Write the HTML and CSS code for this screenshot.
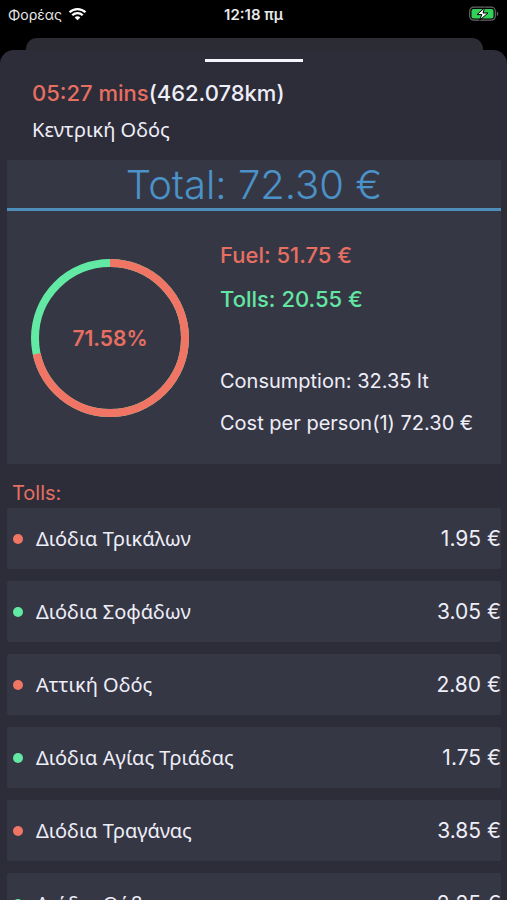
FILE: index.html
```html
<!DOCTYPE html>
<html lang="el">
<head>
  <meta charset="UTF-8">
  <meta name="viewport" content="width=device-width, initial-scale=1.0">
  <title>Route Cost</title>
  <link rel="stylesheet" href="styles.css">
</head>
<body>
  <!-- Status bar -->
  <header class="status-bar">
    <div class="carrier">
      <span>Φορέας</span>
      <svg class="wifi" viewBox="0 0 20 14" aria-hidden="true">
        <path d="M1.6 5.2a12 12 0 0 1 16.8 0" />
        <path d="M4.5 8.3a7.8 7.8 0 0 1 11 0" />
        <path class="wifi-base" d="M10 13.6l-3-3a4.2 4.2 0 0 1 6 0z" />
      </svg>
    </div>
    <time class="clock">12:18 πμ</time>
    <svg class="battery" viewBox="0 0 30 16" aria-hidden="true">
      <rect class="battery-case" x="0.7" y="1.2" width="25.6" height="13" rx="4" />
      <rect class="battery-level" x="2.5" y="3" width="22" height="9.4" rx="2" />
      <path class="battery-cap" d="M27.8 5.4c2 .8 2 3.8 0 4.6z" />
      <path class="battery-bolt" d="M15.6 1.8L8 8.6h4.8l-2.2 5.6L19 7h-5z" />
    </svg>
  </header>

  <div class="back-sheet"></div>

  <main class="sheet">
    <div class="grip"></div>

    <section class="route">
      <h1><span class="duration">05:27 mins</span>(462.078km)</h1>
      <p>Κεντρική Οδός</p>
    </section>

    <!-- Cost summary -->
    <section class="summary">
      <h2 class="total">Total: 72.30 €</h2>
      <div class="summary-body">
        <div class="chart">
          <svg viewBox="0 0 158 158" aria-hidden="true">
            <circle class="ring ring-tolls" cx="79" cy="79" r="75" />
            <circle class="ring ring-fuel" cx="79" cy="79" r="75" pathLength="100" />
          </svg>
          <span class="percent">71.58%</span>
        </div>
        <div class="costs">
          <p class="cost fuel">Fuel: 51.75 €</p>
          <p class="cost tolls">Tolls: 20.55 €</p>
          <p class="detail first">Consumption: 32.35 lt</p>
          <p class="detail">Cost per person(1) 72.30 €</p>
        </div>
      </div>
    </section>

    <!-- List of tolls -->
    <h3 class="list-title">Tolls:</h3>
    <ul class="toll-list">
      <li><span class="name">Διόδια Τρικάλων</span><span class="price">1.95 €</span></li>
      <li><span class="name">Διόδια Σοφάδων</span><span class="price">3.05 €</span></li>
      <li><span class="name">Αττική Οδός</span><span class="price">2.80 €</span></li>
      <li><span class="name">Διόδια Αγίας Τριάδας</span><span class="price">1.75 €</span></li>
      <li><span class="name">Διόδια Τραγάνας</span><span class="price">3.85 €</span></li>
      <li><span class="name">Διόδια Θήβας</span><span class="price">2.25 €</span></li>
    </ul>
  </main>
</body>
</html>
```
FILE: styles.css
```css
* {
  box-sizing: border-box;
}
body {
  display: flex;
  flex-direction: column;
  height: 100vh;
  margin: 0;
  overflow: hidden;
  background-color: #000;
  color: #eeeef8;
  font-family: Inter, "Noto Sans", sans-serif;
  font-size: 20px;
}
h1, h2, h3, p, ul {
  margin: 0;
  padding: 0;
  font-weight: normal;
}

/* Status bar */
.status-bar {
  display: grid;
  grid-template-columns: 1fr auto 1fr;
  align-items: center;
  flex: none;
  height: 28px;
  margin-bottom: 10px;
  padding: 0 8px;
  color: #e8e8e8;
  font-size: 14px;
}
.carrier {
  display: flex;
  align-items: center;
  gap: 6px;
}
.wifi {
  width: 19px;
  height: 14px;
  fill: none;
  stroke: #fff;
  stroke-width: 2.4;
}
.wifi-base {
  fill: #fff;
  stroke: none;
}
.clock {
  font-size: 15px;
  font-weight: 600;
}
.battery {
  justify-self: end;
  width: 30px;
  height: 16px;
}
.battery-case {
  fill: none;
  stroke: #666;
  stroke-width: 1.2;
}
.battery-level {
  fill: #32d158;
}
.battery-cap {
  fill: #666;
}
.battery-bolt {
  fill: #fff;
  stroke: #000;
  stroke-width: 1;
}

/* Sheets */
.back-sheet {
  flex: none;
  height: 24px;
  margin: 0 24px 0 26px;
  border-radius: 11px 11px 0 0;
  background-color: #2c2d34;
}
.sheet {
  flex: 1;
  min-height: 0;
  margin-top: -12px;
  padding: 9px 6px 0 7px;
  overflow: hidden;
  border-radius: 14px 14px 0 0;
  background-color: #2d2c39;
}
.grip {
  width: 98px;
  height: 3px;
  margin: 0 auto;
  background-color: #f4f4fb;
}
.route {
  padding: 16px 25px;
}
.route h1 {
  font-size: 22px;
  font-weight: 500;
  line-height: 30px;
}
.route p {
  margin-top: 8px;
  font-family: "Noto Sans", sans-serif;
  line-height: 28px;
}
.duration {
  color: #e66f61;
}

/* Cost summary */
.summary {
  border-radius: 2px;
  background-color: #363745;
}
.total {
  height: 51px;
  border-bottom: 3px solid #4e8fb9;
  color: #4a92c8;
  font-size: 40px;
  font-weight: 300;
  line-height: 50px;
  text-align: center;
}
.summary-body {
  display: flex;
  gap: 31px;
  padding: 30px 24px 27px;
}
.chart {
  display: grid;
  flex: none;
  place-items: center;
  width: 158px;
  height: 158px;
  margin-top: 18px;
}
.chart svg, .percent {
  grid-area: 1 / 1;
}
.chart svg {
  width: 100%;
  transform: rotate(-90deg);
}
.ring {
  fill: none;
  stroke-width: 8;
}
.ring-tolls {
  stroke: #62eaa4;
}
.ring-fuel {
  stroke: #f07565;
  stroke-dasharray: 71.58 100;
}
.percent {
  color: #e66f61;
  font-size: 21px;
  font-weight: 600;
}
.costs {
  white-space: nowrap;
}
.cost {
  margin-bottom: 16px;
  font-size: 22px;
  font-weight: 500;
  line-height: 28px;
}
.fuel {
  color: #e66f61;
}
.tolls {
  color: #62e6a2;
}
.detail {
  line-height: 28px;
}
.detail.first {
  margin-top: 54px;
  margin-bottom: 14px;
}

/* List of tolls */
.list-title {
  padding: 15px 5px 0;
  color: #e66f61;
  font-size: 20px;
  line-height: 29px;
}
.toll-list {
  display: flex;
  flex-direction: column;
  gap: 12px;
  list-style: none;
}
.toll-list li {
  display: flex;
  align-items: center;
  justify-content: space-between;
  height: 61px;
  padding-left: 6px;
  border-radius: 2px;
  background-color: #363745;
}
.name {
  display: flex;
  align-items: center;
  gap: 13px;
  font-family: "Noto Sans", sans-serif;
}
.name::before {
  content: "";
  width: 10px;
  height: 10px;
  border-radius: 50%;
  background-color: #f07565;
}
.toll-list li:nth-child(even) .name::before {
  background-color: #62eaa4;
}
.price {
  font-size: 21px;
}
```
